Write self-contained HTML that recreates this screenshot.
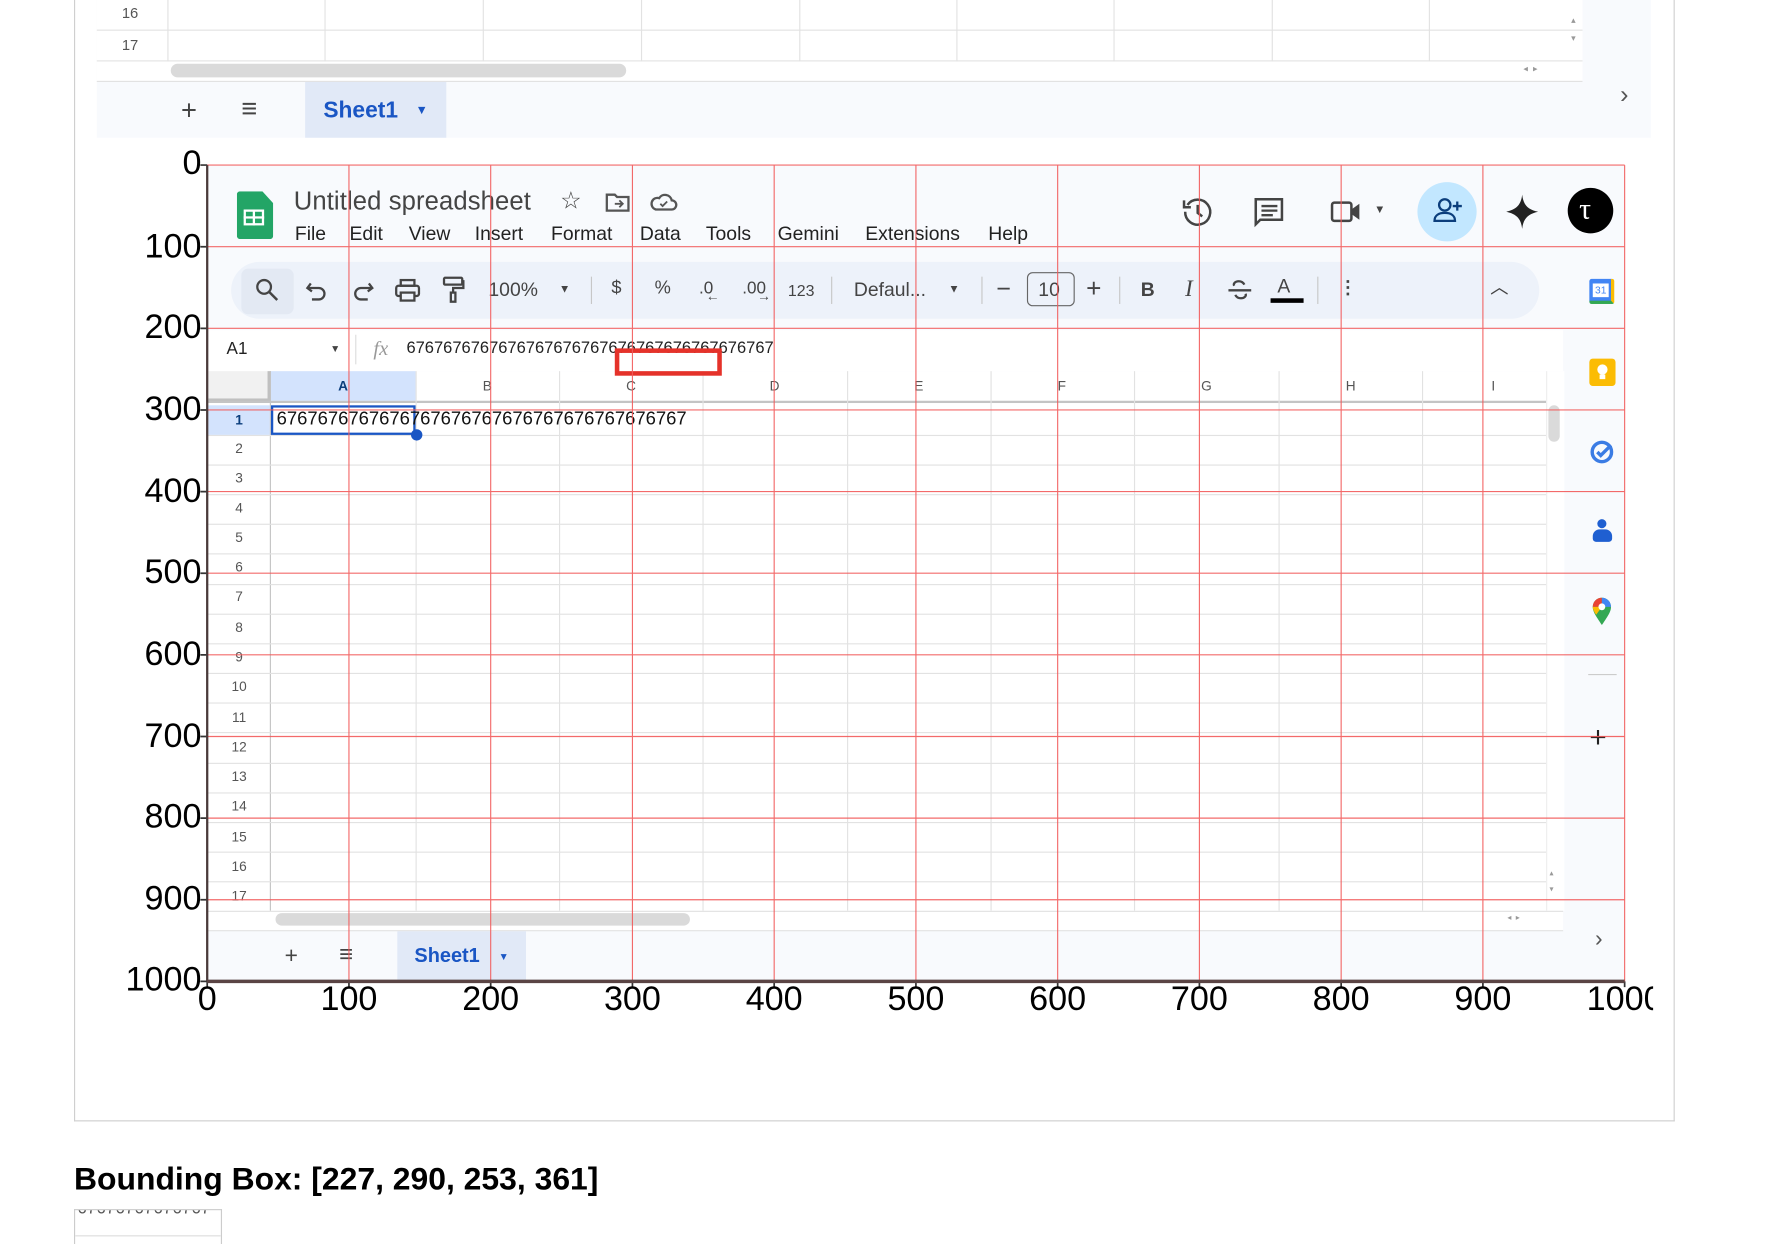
<!DOCTYPE html>
<html><head><meta charset="utf-8">
<style>
html,body{margin:0;padding:0;background:#fff;overflow:hidden;width:1784px;height:1240px}
#w{position:absolute;left:0;top:0;width:1567px;height:1090px;transform:scale(1.1385);transform-origin:0 0;font-family:"Liberation Sans",sans-serif;}
.a{position:absolute}
.t{position:absolute;white-space:nowrap;line-height:1}
.hl{position:absolute;height:1px;background:#e2e2e2}
.vl{position:absolute;width:1px;background:#e2e2e2}
.rn{position:absolute;left:183px;width:54px;text-align:center;font-size:12px;color:#555;line-height:1}
.ch{position:absolute;top:333px;font-size:12px;color:#555;line-height:1}
.tb{position:absolute;top:246px;font-size:16px;color:#444;line-height:1}
.sep{position:absolute;top:243px;width:1px;height:24px;background:#c7c7c7}
</style></head><body><div id="w">

<div class="a" style="left:65px;top:0;width:1404px;height:984px;border:1px solid #cfcfcf;border-top:none"></div>

<div class="a" style="left:85px;top:0;width:1365px;height:121px;background:#f8fafd"></div>
<div class="a" style="left:85px;top:0;width:1305px;height:54px;background:#fff"></div>
<div class="hl" style="left:85px;top:26px;width:1305px"></div>
<div class="hl" style="left:85px;top:53px;width:1305px"></div>
<div class="vl" style="left:147px;top:0;height:54px"></div>
<div class="vl" style="left:285px;top:0;height:54px"></div>
<div class="vl" style="left:424px;top:0;height:54px"></div>
<div class="vl" style="left:563px;top:0;height:54px"></div>
<div class="vl" style="left:702px;top:0;height:54px"></div>
<div class="vl" style="left:840px;top:0;height:54px"></div>
<div class="vl" style="left:978px;top:0;height:54px"></div>
<div class="vl" style="left:1117px;top:0;height:54px"></div>
<div class="vl" style="left:1255px;top:0;height:54px"></div>
<div class="t" style="left:107px;top:5px;font-size:13px;color:#555">16</div>
<div class="t" style="left:107px;top:33px;font-size:13px;color:#555">17</div>
<div class="a" style="left:85px;top:54px;width:1305px;height:17px;background:#fff;border-bottom:1px solid #e2e2e2"></div>
<div class="a" style="left:150px;top:56px;width:400px;height:12px;border-radius:6px;background:#dadada"></div>
<div class="t" style="left:1338px;top:57px;font-size:8px;color:#999">◂ &nbsp;▸</div>
<div class="t" style="left:1380px;top:14px;font-size:8px;color:#999">▴<br><br>▾</div>
<div class="t" style="left:159px;top:86px;font-size:24px;color:#444">+</div>
<div class="t" style="left:212px;top:84px;font-size:24px;color:#444">≡</div>
<div class="a" style="left:268px;top:72px;width:124px;height:49px;background:#e1e9f7"></div>
<div class="t" style="left:284px;top:87px;font-size:20px;font-weight:bold;color:#1a56c4">Sheet1</div>
<div class="t" style="left:365px;top:92px;font-size:11px;color:#1a56c4">▼</div>
<div class="t" style="left:1423px;top:72px;font-size:22px;color:#555">›</div>

<div class="a" style="left:182px;top:145px;width:1245px;height:717px;background:#f8fafd;overflow:hidden"></div>
<div class="a" style="left:208px;top:168px;width:32px;height:42px;background:#23a566;border-radius:3px;clip-path:polygon(0 0,70% 0,100% 25%,100% 100%,0 100%)"></div>
<div class="a" style="left:214px;top:184px;width:18px;height:14px;border:2px solid #fff;box-sizing:border-box"></div>
<div class="a" style="left:222px;top:184px;width:2px;height:14px;background:#fff"></div>
<div class="a" style="left:214px;top:190px;width:18px;height:2px;background:#fff"></div>
<div class="t" style="left:258px;top:166px;font-size:22.5px;color:#444;letter-spacing:0.1px">Untitled spreadsheet</div>
<div class="t" style="left:492px;top:166px;font-size:21px;color:#444">☆</div>
<svg class="a" style="left:531px;top:168px" width="24" height="20"><path d="M2 3h7l2 2h10v12H2z" fill="none" stroke="#555" stroke-width="2"/><path d="M9 11h7M13 8l3 3-3 3" fill="none" stroke="#555" stroke-width="1.6"/></svg>
<svg class="a" style="left:570px;top:167px" width="26" height="22"><path d="M6 17h14a4 4 0 0 0 0-8 6 6 0 0 0-11-2A5 5 0 0 0 6 17z" fill="none" stroke="#555" stroke-width="2"/><path d="M10 12l2 2 4-4" fill="none" stroke="#555" stroke-width="1.6"/></svg>
<div class="t" style="left:259px;top:197px;font-size:17px;color:#222">File</div>
<div class="t" style="left:307px;top:197px;font-size:17px;color:#222">Edit</div>
<div class="t" style="left:359px;top:197px;font-size:17px;color:#222">View</div>
<div class="t" style="left:417px;top:197px;font-size:17px;color:#222">Insert</div>
<div class="t" style="left:484px;top:197px;font-size:17px;color:#222">Format</div>
<div class="t" style="left:562px;top:197px;font-size:17px;color:#222">Data</div>
<div class="t" style="left:620px;top:197px;font-size:17px;color:#222">Tools</div>
<div class="t" style="left:683px;top:197px;font-size:17px;color:#222">Gemini</div>
<div class="t" style="left:760px;top:197px;font-size:17px;color:#222">Extensions</div>
<div class="t" style="left:868px;top:197px;font-size:17px;color:#222">Help</div>
<svg class="a" style="left:1037px;top:171px" width="30" height="30"><path d="M6 9A11 11 0 1 1 4 15" fill="none" stroke="#444" stroke-width="2.2"/><path d="M3 5v6h6" fill="none" stroke="#444" stroke-width="2.2"/><path d="M15 9v7l4 3" fill="none" stroke="#444" stroke-width="2.2"/></svg>
<svg class="a" style="left:1100px;top:172px" width="30" height="30"><path d="M3 3h23v18H7l-4 4z" fill="none" stroke="#444" stroke-width="2.2"/><path d="M8 9h14M8 13h14M8 17h10" stroke="#444" stroke-width="2"/></svg>
<svg class="a" style="left:1168px;top:174px" width="30" height="24"><rect x="2" y="4" width="17" height="16" rx="2" fill="none" stroke="#444" stroke-width="2.2"/><path d="M19 10l7-5v14l-7-5z" fill="#444"/></svg>
<div class="t" style="left:1207px;top:180px;font-size:10px;color:#444">▼</div>
<div class="a" style="left:1245px;top:160px;width:52px;height:52px;border-radius:26px;background:#c2e7ff"></div>
<svg class="a" style="left:1258px;top:172px" width="28" height="28"><circle cx="11" cy="8" r="5" fill="none" stroke="#0b3e7c" stroke-width="2"/><path d="M2 22c0-5 4-7 9-7s9 2 9 7z" fill="none" stroke="#0b3e7c" stroke-width="2"/><path d="M22 5v8M18 9h8" stroke="#0b3e7c" stroke-width="2"/></svg>
<svg class="a" style="left:1322px;top:170px" width="30" height="32"><path d="M15 1C16 10 20 14 29 16 20 18 16 22 15 31 14 22 10 18 1 16 10 14 14 10 15 1z" fill="#222"/></svg>
<div class="a" style="left:1377px;top:165px;width:40px;height:40px;border-radius:20px;background:#000"></div>
<div class="t" style="left:1387px;top:171px;font-size:26px;color:#fff;font-family:'Liberation Serif',serif">τ</div>

<div class="a" style="left:203px;top:230px;width:1149px;height:50px;border-radius:25px;background:#edf2fa"></div>
<div class="a" style="left:212px;top:236px;width:46px;height:40px;border-radius:6px;background:#e3e9f3"></div>
<svg class="a" style="left:224px;top:244px" width="22" height="22"><circle cx="8" cy="8" r="6" fill="none" stroke="#444" stroke-width="2"/><path d="M12.5 12.5l7 7" stroke="#444" stroke-width="2.2"/></svg>
<svg class="a" style="left:268px;top:246px" width="22" height="20"><path d="M5 3L2 7l4 3" fill="none" stroke="#444" stroke-width="2"/><path d="M2 7h10a5 5 0 0 1 0 10H6" fill="none" stroke="#444" stroke-width="2"/></svg>
<svg class="a" style="left:307px;top:246px" width="22" height="20"><path d="M17 3l3 4-4 3" fill="none" stroke="#444" stroke-width="2"/><path d="M20 7H10a5 5 0 0 0 0 10h6" fill="none" stroke="#444" stroke-width="2"/></svg>
<svg class="a" style="left:346px;top:244px" width="24" height="22"><rect x="6" y="2" width="12" height="5" fill="none" stroke="#444" stroke-width="2"/><rect x="2" y="7" width="20" height="9" rx="2" fill="none" stroke="#444" stroke-width="2"/><rect x="6" y="13" width="12" height="7" fill="#edf2fa" stroke="#444" stroke-width="2"/></svg>
<svg class="a" style="left:387px;top:242px" width="22" height="26"><rect x="3" y="2" width="16" height="6" rx="1" fill="none" stroke="#444" stroke-width="2"/><path d="M19 5h1v6h-9v4" fill="none" stroke="#444" stroke-width="2"/><rect x="9" y="15" width="4" height="8" fill="none" stroke="#444" stroke-width="2"/></svg>
<div class="tb" style="left:429px;font-size:17px">100%</div>
<div class="t" style="left:491px;top:250px;font-size:10px;color:#444">▼</div>
<div class="sep" style="left:519px"></div>
<div class="tb" style="left:537px">$</div>
<div class="tb" style="left:575px">%</div>
<div class="tb" style="left:614px;font-size:15px">.0</div>
<div class="t" style="left:620px;top:254px;font-size:12px;color:#444">←</div>
<div class="tb" style="left:652px;font-size:15px">.00</div>
<div class="t" style="left:665px;top:254px;font-size:12px;color:#444">→</div>
<div class="tb" style="left:692px;font-size:14px;top:248px">123</div>
<div class="sep" style="left:730px"></div>
<div class="tb" style="left:750px;font-size:17px">Defaul...</div>
<div class="t" style="left:833px;top:250px;font-size:10px;color:#444">▼</div>
<div class="sep" style="left:862px"></div>
<div class="t" style="left:875px;top:243px;font-size:22px;color:#444">−</div>
<div class="a" style="left:902px;top:239px;width:42px;height:30px;border:1.5px solid #666;border-radius:5px;box-sizing:border-box"></div>
<div class="tb" style="left:912px;font-size:17px">10</div>
<div class="t" style="left:954px;top:242px;font-size:23px;color:#444">+</div>
<div class="sep" style="left:983px"></div>
<div class="tb" style="left:1002px;font-weight:bold;font-size:17px">B</div>
<div class="tb" style="left:1041px;font-style:italic;font-size:20px;top:244px;font-family:'Liberation Serif',serif">I</div>
<svg class="a" style="left:1077px;top:243px" width="24" height="24"><path d="M16 7c-1-2-3-3-5-3-3 0-5 2-4 4M8 16c1 2 3 3 5 3 3 0 5-2 4-4" fill="none" stroke="#444" stroke-width="2"/><path d="M2 12h20" stroke="#444" stroke-width="2"/></svg>
<div class="tb" style="left:1122px;font-size:17px;top:243px">A</div>
<div class="a" style="left:1116px;top:262px;width:29px;height:4px;background:#000"></div>
<div class="sep" style="left:1157px"></div>
<div class="tb" style="left:1176px;font-weight:bold">⋮</div>
<div class="t" style="left:1309px;top:246px;font-size:16px;color:#444">︿</div>

<div class="a" style="left:182px;top:290px;width:1191px;height:36px;background:#fff"></div>
<div class="t" style="left:199px;top:299px;font-size:15px;color:#222">A1</div>
<div class="t" style="left:290px;top:302px;font-size:9px;color:#444">▼</div>
<div class="vl" style="left:312px;top:294px;height:26px;background:#ddd"></div>
<div class="t" style="left:328px;top:297px;font-size:18px;color:#999;font-style:italic;font-family:'Liberation Serif',serif">fx</div>
<div class="t" style="left:357px;top:299px;font-size:14.5px;color:#222">6767676767676767676767676767676767676767</div>

<div class="a" style="left:182px;top:326px;width:1176px;height:474px;background:#fff"></div>
<div class="a" style="left:183px;top:326px;width:52px;height:24px;background:#f1f1f1;border-right:3px solid #c0c0c0;border-bottom:3px solid #c0c0c0"></div>
<div class="a" style="left:238px;top:326px;width:127px;height:26px;background:#d3e3fd"></div>
<div class="a" style="left:183px;top:356px;width:54px;height:26px;background:#d3e3fd"></div>
<div class="hl" style="left:182px;top:352px;width:1176px;height:2px;background:#c4c4c4"></div>
<div class="vl" style="left:237px;top:326px;height:474px;background:#c4c4c4"></div>
<div class="vl" style="left:365px;top:326px;height:474px"></div>
<div class="vl" style="left:491px;top:326px;height:474px"></div>
<div class="vl" style="left:617px;top:326px;height:474px"></div>
<div class="vl" style="left:744px;top:326px;height:474px"></div>
<div class="vl" style="left:870px;top:326px;height:474px"></div>
<div class="vl" style="left:996px;top:326px;height:474px"></div>
<div class="vl" style="left:1123px;top:326px;height:474px"></div>
<div class="vl" style="left:1249px;top:326px;height:474px"></div>
<div class="ch" style="left:297px;font-weight:bold;color:#0b3e7c">A</div>
<div class="ch" style="left:424px">B</div>
<div class="ch" style="left:550px">C</div>
<div class="ch" style="left:676px">D</div>
<div class="ch" style="left:803px">E</div>
<div class="ch" style="left:929px">F</div>
<div class="ch" style="left:1055px">G</div>
<div class="ch" style="left:1182px">H</div>
<div class="ch" style="left:1310px">I</div>
<div class="hl" style="left:182px;top:382px;width:1176px"></div>
<div class="hl" style="left:182px;top:408px;width:1176px"></div>
<div class="hl" style="left:182px;top:434px;width:1176px"></div>
<div class="hl" style="left:182px;top:460px;width:1176px"></div>
<div class="hl" style="left:182px;top:486px;width:1176px"></div>
<div class="hl" style="left:182px;top:513px;width:1176px"></div>
<div class="hl" style="left:182px;top:539px;width:1176px"></div>
<div class="hl" style="left:182px;top:565px;width:1176px"></div>
<div class="hl" style="left:182px;top:591px;width:1176px"></div>
<div class="hl" style="left:182px;top:617px;width:1176px"></div>
<div class="hl" style="left:182px;top:643px;width:1176px"></div>
<div class="hl" style="left:182px;top:670px;width:1176px"></div>
<div class="hl" style="left:182px;top:696px;width:1176px"></div>
<div class="hl" style="left:182px;top:722px;width:1176px"></div>
<div class="hl" style="left:182px;top:748px;width:1176px"></div>
<div class="hl" style="left:182px;top:774px;width:1176px"></div>
<div class="rn" style="top:363px;font-weight:bold;color:#0b3e7c">1</div>
<div class="rn" style="top:388px">2</div>
<div class="rn" style="top:414px">3</div>
<div class="rn" style="top:440px">4</div>
<div class="rn" style="top:466px">5</div>
<div class="rn" style="top:492px">6</div>
<div class="rn" style="top:518px">7</div>
<div class="rn" style="top:545px">8</div>
<div class="rn" style="top:571px">9</div>
<div class="rn" style="top:597px">10</div>
<div class="rn" style="top:624px">11</div>
<div class="rn" style="top:650px">12</div>
<div class="rn" style="top:676px">13</div>
<div class="rn" style="top:702px">14</div>
<div class="rn" style="top:729px">15</div>
<div class="rn" style="top:755px">16</div>
<div class="rn" style="top:781px">17</div>
<div class="a" style="left:238px;top:356px;width:127px;height:26px;border:2px solid #1a56c4;box-sizing:border-box"></div>
<div class="a" style="left:361px;top:377px;width:10px;height:10px;border-radius:5px;background:#1a56c4"></div>
<div class="t" style="left:243px;top:360px;font-size:16.2px;color:#111">6767676767676767676767676767676767676767</div>
<div class="a" style="left:1358px;top:326px;width:15px;height:474px;background:#fff;border-left:1px solid #eee"></div>
<div class="a" style="left:1360px;top:356px;width:10px;height:32px;border-radius:5px;background:#dadada"></div>
<div class="t" style="left:1361px;top:764px;font-size:7px;color:#999">▴<br><br>▾</div>
<div class="a" style="left:182px;top:800px;width:1191px;height:16px;background:#fff;border-top:1px solid #e2e2e2;border-bottom:1px solid #e2e2e2"></div>
<div class="a" style="left:242px;top:802px;width:364px;height:11px;border-radius:6px;background:#dadada"></div>
<div class="t" style="left:1324px;top:803px;font-size:7px;color:#999">◂ &nbsp;▸</div>
<div class="t" style="left:250px;top:830px;font-size:20px;color:#444">+</div>
<div class="t" style="left:298px;top:828px;font-size:21px;color:#444">≡</div>
<div class="a" style="left:349px;top:818px;width:113px;height:44px;background:#e1e9f7"></div>
<div class="t" style="left:364px;top:831px;font-size:17.5px;font-weight:bold;color:#1a56c4">Sheet1</div>
<div class="t" style="left:438px;top:836px;font-size:9px;color:#1a56c4">▼</div>
<div class="t" style="left:1401px;top:815px;font-size:20px;color:#555">›</div>
<div class="a" style="left:1396px;top:245px;width:22px;height:22px;border-radius:2px;background:#4285f4;border-bottom:3px solid #34a853;border-right:3px solid #fbbc04;box-sizing:border-box"></div>
<div class="a" style="left:1399px;top:249px;width:14px;height:12px;background:#fff;font-size:9px;color:#4285f4;text-align:center;line-height:12px">31</div>
<div class="a" style="left:1396px;top:315px;width:23px;height:24px;border-radius:3px;background:#fbbc04"></div>
<div class="a" style="left:1403px;top:320px;width:9px;height:9px;border-radius:5px;background:#fff"></div>
<div class="a" style="left:1405px;top:329px;width:5px;height:4px;background:#fff"></div>
<svg class="a" style="left:1395px;top:384px" width="26" height="26"><circle cx="12" cy="13" r="8.5" fill="none" stroke="#3b7ce4" stroke-width="3"/><path d="M8 13l3 3 9-9" fill="none" stroke="#3b7ce4" stroke-width="3"/></svg>
<div class="a" style="left:1403px;top:456px;width:8px;height:8px;border-radius:4px;background:#1f5fd1"></div>
<div class="a" style="left:1399px;top:465px;width:17px;height:11px;border-radius:6px 6px 3px 3px;background:#1f5fd1"></div>
<svg class="a" style="left:1397px;top:524px" width="20" height="26"><path d="M10 25C4 16 2 13 2 9a8 8 0 0 1 16 0c0 4-2 7-8 16z" fill="#34a853"/><path d="M2 9a8 8 0 0 1 8-8v8z" fill="#ea4335"/><path d="M10 1a8 8 0 0 1 8 8h-8z" fill="#4285f4"/><path d="M2 9h8l-5 7C3 13 2 11 2 9z" fill="#fbbc04"/><circle cx="10" cy="9" r="3" fill="#fff"/></svg>
<div class="a" style="left:1395px;top:592px;width:25px;height:1px;background:#ccc"></div>
<div class="t" style="left:1396px;top:634px;font-size:26px;color:#222">+</div>

<div class="a" style="left:540px;top:306px;width:94px;height:24px;border:4px solid #e5322a;box-sizing:border-box"></div>

<svg class="a" style="left:0;top:0" width="1452" height="900">
<g stroke="#f25a5a" stroke-width="1" opacity="0.9">
<path d="M182 145H1427M182 216.7H1427M182 288.4H1427M182 360.1H1427M182 431.8H1427M182 503.5H1427M182 575.2H1427M182 646.9H1427M182 718.6H1427M182 790.3H1427"/>
<path d="M306.5 145V862M431 145V862M555.5 145V862M680 145V862M804.5 145V862M929 145V862M1053.5 145V862M1178 145V862M1302.5 145V862M1427 145V862"/>
</g>
<g stroke="#333" stroke-width="1.5">
<path d="M176 145h6M176 216.7h6M176 288.4h6M176 360.1h6M176 431.8h6M176 503.5h6M176 575.2h6M176 646.9h6M176 718.6h6M176 790.3h6M176 862h6"/>
<path d="M182 862v5M306.5 862v5M431 862v5M555.5 862v5M680 862v5M804.5 862v5M929 862v5M1053.5 862v5M1178 862v5M1302.5 862v5M1427 862v5"/>
</g>
<path d="M182 145V862" stroke="#4a3a3a" stroke-width="2"/>
<path d="M182 862H1427" stroke="#5a4444" stroke-width="3"/>
<g font-family="Liberation Sans, sans-serif" font-size="30" fill="#000" text-anchor="end">
<text x="177" y="153">0</text><text x="177" y="226">100</text><text x="177" y="297">200</text><text x="177" y="369">300</text><text x="177" y="441">400</text><text x="177" y="512">500</text><text x="177" y="584">600</text><text x="177" y="656">700</text><text x="177" y="727">800</text><text x="177" y="799">900</text><text x="177" y="870">1000</text>
</g>
<g font-family="Liberation Sans, sans-serif" font-size="30" fill="#000" text-anchor="middle">
<text x="182" y="887">0</text><text x="306.5" y="887">100</text><text x="431" y="887">200</text><text x="555.5" y="887">300</text><text x="680" y="887">400</text><text x="804.5" y="887">500</text><text x="929" y="887">600</text><text x="1053.5" y="887">700</text><text x="1178" y="887">800</text><text x="1302.5" y="887">900</text><text x="1427" y="887">1000</text>
</g>
</svg>

<div class="t" style="left:65px;top:1022px;font-size:28px;font-weight:bold;color:#000">Bounding Box: [227, 290, 253, 361]</div>
<div class="a" style="left:65px;top:1062px;width:128px;height:30px;border:1px solid #ccc;border-bottom:none;overflow:hidden;background:#fff">
<div class="t" style="left:2px;top:-9px;font-size:15px;color:#555">67676767676767</div>
<div class="a" style="left:0;top:22px;width:128px;height:1px;background:#ddd"></div>
</div>
</div></body></html>
